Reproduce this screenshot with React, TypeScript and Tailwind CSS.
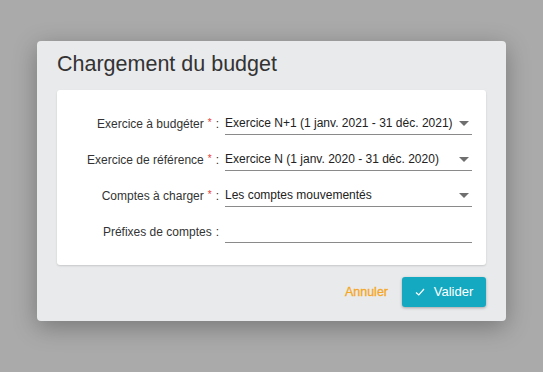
import React from "react";

const font = { fontFamily: '"Liberation Sans", Arial, sans-serif' };

function Caret() {
  return (
    <svg width="10" height="5" viewBox="0 0 10 5" className="shrink-0">
      <path d="M0 0 L10 0 L5 5 Z" fill="#6f6f6f" />
    </svg>
  );
}

function Row({
  label,
  required,
  value,
  select,
}: {
  label: string;
  required?: boolean;
  value?: string;
  select?: boolean;
}) {
  return (
    <div className="flex items-center h-[23px]">
      <div className="w-[162px] text-right text-[12px] text-[#333333] whitespace-nowrap">
        {label}
        {required && <span className="text-[#e53935] text-[10px] relative -top-[2px] ml-[4px]">*</span>}
        <span className="ml-[4px]">:</span>
      </div>
      <div className="ml-[6px] w-[247px] h-[23px] border-b border-[#8a8a8a] flex items-center justify-between pr-[3px]">
        <span className="text-[12px] text-[#222222] whitespace-nowrap">{value}</span>
        {select && <Caret />}
      </div>
    </div>
  );
}

export default function App() {
  return (
    <div className="w-[543px] h-[372px] bg-[#aaaaaa] pl-[37px] pt-[41px]" style={font}>
      <div className="w-[469px] h-[280px] bg-[#e9eaec] rounded-[4px] shadow-[0_6px_24px_rgba(0,0,0,0.3)] px-[20px] pt-[11px] flex flex-col">
        <div className="text-[21.5px] leading-[25px] text-[#333333]">Chargement du budget</div>
        <div className="mt-[13px] w-[429px] h-[175px] bg-white rounded-[3px] shadow-[0_1px_2px_rgba(0,0,0,0.15)] pt-[22px] flex flex-col gap-[13px]">
          <Row label="Exercice à budgéter" required value="Exercice N+1 (1 janv. 2021 - 31 déc. 2021)" select />
          <Row label="Exercice de référence" required value="Exercice N (1 janv. 2020 - 31 déc. 2020)" select />
          <Row label="Comptes à charger" required value="Les comptes mouvementés" select />
          <Row label="Préfixes de comptes" />
        </div>
        <div className="mt-[12px] flex justify-end items-center">
          <span className="text-[12.5px] text-[#f5a623] mr-[14px] [-webkit-text-stroke:0.3px_#f5a623]">Annuler</span>
          <div className="w-[84px] h-[30px] bg-[#15a9c1] rounded-[3px] shadow-[0_1px_3px_rgba(0,0,0,0.3)] flex items-center justify-center gap-[9px] text-white text-[13px]">
            <svg width="10" height="8" viewBox="0 0 10 8">
              <path d="M1 4.5 L3.8 7 L9 1" fill="none" stroke="white" strokeWidth="1.2" />
            </svg>
            <span>Valider</span>
          </div>
        </div>
      </div>
    </div>
  );
}
